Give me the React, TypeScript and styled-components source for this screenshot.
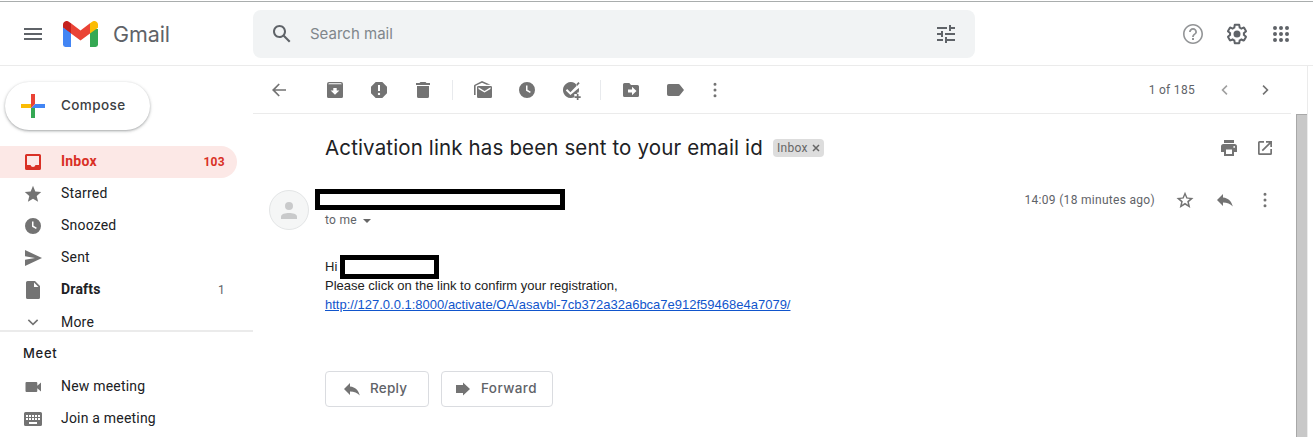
import React from 'react';
import styled, { createGlobalStyle } from 'styled-components';

const Global = createGlobalStyle`
  * { box-sizing: border-box; }
  body { margin: 0; background: #fff; font-family: Roboto, 'Liberation Sans', sans-serif; color: #202124; overflow: hidden; }
`;

const product = `Inter, 'Open Sans', sans-serif`;

const Page = styled.div`
  width: 1313px;
  height: 437px;
  display: flex;
  flex-direction: column;
  padding-top: 1px;
  overflow: hidden;
`;

const Header = styled.header`
  height: 65px;
  flex: none;
  display: flex;
  align-items: center;
  border-top: 1px solid #a9adad;
  border-bottom: 1px solid #ebebeb;
`;

const Brand = styled.div`
  width: 253px;
  display: flex;
  align-items: center;
  padding-left: 23px;
`;

const LogoMark = styled.span`
  display: flex;
  margin-left: 20px;
`;

const BrandName = styled.span`
  margin-left: 15px;
  font: 400 21.5px/28px ${product};
  letter-spacing: -0.1px;
  color: #5f6368;
`;

const Search = styled.div`
  width: 722px;
  height: 48px;
  margin-top: 1px;
  display: flex;
  align-items: center;
  border-radius: 8px;
  background: #f1f3f4;
  padding: 0 17px;
`;

const Placeholder = styled.span`
  flex: 1;
  margin-left: 16px;
  font: 400 15px/24px ${product};
  letter-spacing: 0;
  color: #80868b;
`;

const HeaderTools = styled.div`
  margin-left: auto;
  padding-right: 20px;
  display: flex;
  gap: 20px;
`;

const Body = styled.div`
  flex: 1;
  min-height: 0;
  display: flex;
`;

const Sidebar = styled.aside`
  width: 253px;
  display: flex;
  flex-direction: column;
`;

const Compose = styled.button`
  width: 145px;
  height: 48px;
  flex: none;
  margin: 16px 0 16px 5px;
  display: flex;
  align-items: center;
  gap: 16px;
  border: 0;
  border-radius: 24px;
  padding: 0 0 0 16px;
  background: #fff;
  box-shadow: 0 1px 2px rgba(60, 64, 67, 0.3), 0 1px 3px 1px rgba(60, 64, 67, 0.15);
  font: 500 13.5px/20px ${product};
  letter-spacing: 0.4px;
  color: #3c4043;
`;

const ComposeLabel = styled.span`
  padding-bottom: 2px;
`;

const Folders = styled.nav`
  height: 184px;
  overflow: hidden;
`;

const Folder = styled.div<{ $active?: boolean; $bold?: boolean }>`
  width: 237px;
  height: 32px;
  display: flex;
  align-items: center;
  padding: 0 12px 0 23px;
  border-radius: 0 16px 16px 0;
  background: ${p => (p.$active ? '#fce8e6' : 'transparent')};
  color: ${p => (p.$active ? '#d93025' : '#202124')};
  font-size: 14px;
  line-height: 20px;
  letter-spacing: 0.2px;
  font-weight: ${p => (p.$active || p.$bold ? 700 : 400)};
`;

const FolderName = styled.span<{ $low?: boolean }>`
  flex: 1;
  margin: 0 0 ${p => (p.$low ? 0 : 2)}px 18px;
`;

const Count = styled.span<{ $plain?: boolean }>`
  font-size: 12px;
  letter-spacing: 0.3px;
  font-weight: ${p => (p.$plain ? 400 : 700)};
  color: ${p => (p.$plain ? '#5f6368' : 'inherit')};
`;

const Meet = styled.section`
  flex: 1;
  border-top: 2px solid #ebebeb;
  padding-top: 7px;
`;

const MeetTitle = styled.h2`
  margin: 0 0 4px;
  padding-left: 23px;
  font: 500 13px/28px ${product};
  letter-spacing: 0.7px;
`;

const Main = styled.main`
  width: 1055px;
  display: flex;
  flex-direction: column;
  border-right: 1px solid #ebebeb;
`;

const Toolbar = styled.div`
  width: 1038px;
  height: 48px;
  flex: none;
  display: flex;
  align-items: center;
  border-bottom: 1px solid #ebebeb;
  padding: 0 16px;
`;

const Group = styled.div<{ $gap: number; $left?: number }>`
  display: flex;
  align-items: center;
  gap: ${p => p.$gap}px;
  margin-left: ${p => (p.$left === undefined ? 'auto' : p.$left + 'px')};
`;

const Divider = styled.i`
  width: 1px;
  height: 20px;
  background: #e8eaed;
  margin-left: 19px;
`;

const Paging = styled.span`
  font-size: 12px;
  letter-spacing: 0.3px;
  color: #5f6368;
`;

const Reader = styled.div`
  flex: 1;
  min-height: 0;
  display: flex;
`;

const Message = styled.article`
  width: 1043px;
`;

const SubjectRow = styled.div`
  height: 68px;
  width: 1022px;
  display: flex;
  align-items: center;
  padding-left: 72px;
`;

const Subject = styled.h1`
  margin: 0;
  width: 448px;
  white-space: nowrap;
  font: 400 20.5px/28px ${product};
  letter-spacing: 0.14px;
`;

const Chip = styled.span`
  width: 51px;
  height: 18px;
  display: flex;
  align-items: center;
  gap: 4px;
  padding-left: 4px;
  border-radius: 4px;
  background: #ddd;
  color: #666;
  font-size: 12px;
  letter-spacing: 0.3px;
`;

const SenderRow = styled.div`
  width: 1022px;
  height: 54px;
  display: flex;
  align-items: flex-start;
  padding: 7px 0 0 16px;
`;

const MessageTools = styled.div`
  height: 22px;
  margin-left: auto;
  display: flex;
  align-items: center;
  gap: 20px;
`;

const Avatar = styled.div`
  width: 40px;
  height: 40px;
  margin-top: 1px;
  border-radius: 50%;
  border: 1px solid #e3e5e6;
  background: #f5f6f6;
  display: flex;
  align-items: center;
  justify-content: center;
`;

const Sender = styled.div`
  margin-left: 6px;
`;

const Redacted = styled.div<{ $w: number; $h: number }>`
  width: ${p => p.$w}px;
  height: ${p => p.$h}px;
  flex: none;
  border: 5px solid #000;
  background: #fff;
`;

const Recipient = styled.div`
  display: flex;
  align-items: center;
  gap: 6px;
  padding: 1px 0 0 10px;
  font-size: 12px;
  line-height: 19px;
  letter-spacing: 0.3px;
  color: #5f6368;
`;

const Content = styled.div`
  padding: 19px 0 0 72px;
  font: 13px/19px 'Liberation Sans', Arial, sans-serif;
  color: #222;
`;

const Line = styled.div<{ $tall?: boolean }>`
  display: flex;
  height: ${p => (p.$tall ? 21 : 19)}px;
  gap: 2px;
`;

const Greeting = styled.span`
  width: 13px;
  padding-top: 2px;
`;

const Link = styled.a`
  color: #15c;
  text-decoration: underline;
`;

const Actions = styled.div`
  display: flex;
  gap: 12px;
  padding: 57px 0 0 72px;
`;

const Action = styled.button<{ $w: number; $pad: number; $track: number }>`
  width: ${p => p.$w}px;
  height: 36px;
  border: 1px solid #dadce0;
  border-radius: 4px;
  background: #fff;
  display: flex;
  align-items: center;
  gap: 8px;
  padding: 0 0 0 ${p => p.$pad}px;
  font: 500 13.5px/20px ${product};
  letter-spacing: ${p => p.$track}px;
  color: #5f6368;
`;

const ActionLabel = styled.span`
  padding-bottom: 2px;
`;

const Scrollbar = styled.div`
  width: 11px;
  border-top: 1px solid #a8a8a8;
  border-left: 1px solid #a8a8a8;
  background: #c8c8c8;
`;

const Glyph = styled.svg`
  flex: none;
`;

type IconProps = { d: string; size?: number; box?: number; color?: string };

const Icon = ({ d, size = 20, box = 20, color = '#737373' }: IconProps) => (
  <Glyph width={size} height={size} viewBox={`0 0 ${box} ${box}`} fill={color} fillRule="evenodd">
    <path d={d} />
  </Glyph>
);

const icons = {
  menu: 'M1 4h18v2H1zM1 9h18v2H1zM1 14h18v2H1z',
  search: 'M20.49 19l-5.73-5.73C15.53 12.2 16 10.91 16 9.5 16 5.91 13.09 3 9.5 3S3 5.91 3 9.5 5.91 16 9.5 16c1.41 0 2.7-.47 3.77-1.24L19 20.49 20.49 19zM5 9.5C5 7.01 7.01 5 9.5 5S14 7.01 14 9.5 11.99 14 9.5 14 5 11.99 5 9.5z',
  tune: 'M3 17v2h6v-2H3zM3 5v2h10V5H3zm10 16v-2h8v-2h-8v-2h-2v6h2zM7 9v2H3v2h4v2h2V9H7zm14 4v-2H11v2h10zm-6-4h2V7h4V5h-4V3h-2v6z',
  help: 'M11 18h2v-2h-2v2zm1-16C6.48 2 2 6.48 2 12s4.48 10 10 10 10-4.48 10-10S17.52 2 12 2zm0 18.4c-4.63 0-8.4-3.77-8.4-8.4S7.37 3.6 12 3.6s8.4 3.77 8.4 8.4-3.77 8.4-8.4 8.4zM12 6c-2.21 0-4 1.79-4 4h1.8c0-1.1 1.1-2.2 2.2-2.2s2.2.9 2.2 2.2c0 2-3.1 1.75-3.1 5h1.8c0-2.25 3.1-2.5 3.1-5 0-2.21-1.79-4-4-4z',
  gear: 'M13.85 22.25h-3.7c-.74 0-1.36-.54-1.45-1.27l-.27-1.89c-.27-.14-.53-.29-.79-.46l-1.8.72c-.7.26-1.47-.03-1.81-.65L2.2 15.53c-.35-.66-.2-1.44.36-1.88l1.53-1.19c-.01-.15-.02-.3-.02-.46 0-.15.01-.31.02-.46l-1.52-1.19c-.59-.45-.74-1.26-.37-1.88l1.85-3.19c.34-.62 1.11-.9 1.79-.63l1.81.73c.26-.17.52-.32.78-.46l.27-1.91c.09-.7.71-1.25 1.44-1.25h3.7c.74 0 1.36.54 1.45 1.27l.27 1.89c.27.14.53.29.79.46l1.8-.72c.71-.26 1.48.03 1.82.65l1.84 3.18c.36.66.2 1.44-.36 1.88l-1.52 1.19c.01.15.02.3.02.46s-.01.31-.02.46l1.52 1.19c.56.45.72 1.23.37 1.86l-1.86 3.22c-.34.62-1.11.9-1.8.63l-1.8-.72c-.26.17-.52.32-.78.46l-.27 1.91c-.1.68-.72 1.22-1.46 1.22zm-3.23-2h2.76l.37-2.55.53-.22c.44-.18.88-.44 1.34-.78l.45-.34 2.38.96 1.38-2.4-2.03-1.58.07-.56c.03-.26.06-.51.06-.78s-.03-.53-.06-.78l-.07-.56 2.03-1.58-1.39-2.4-2.39.96-.45-.35c-.42-.32-.87-.58-1.33-.77l-.52-.22-.37-2.55h-2.76l-.37 2.55-.53.21c-.44.19-.88.44-1.34.79l-.45.33-2.38-.95-1.39 2.39 2.03 1.58-.07.56a7 7 0 0 0-.06.79c0 .26.02.53.06.78l.07.56-2.03 1.58 1.38 2.4 2.39-.96.45.35c.43.33.86.58 1.33.77l.53.22.38 2.55zM15.5 12a3.5 3.5 0 1 1-7 0 3.5 3.5 0 0 1 7 0z',
  apps: 'M6 8a2 2 0 1 0 0-4 2 2 0 0 0 0 4zm6 0a2 2 0 1 0 0-4 2 2 0 0 0 0 4zm6 0a2 2 0 1 0 0-4 2 2 0 0 0 0 4zM6 14a2 2 0 1 0 0-4 2 2 0 0 0 0 4zm6 0a2 2 0 1 0 0-4 2 2 0 0 0 0 4zm6 0a2 2 0 1 0 0-4 2 2 0 0 0 0 4zM6 20a2 2 0 1 0 0-4 2 2 0 0 0 0 4zm6 0a2 2 0 1 0 0-4 2 2 0 0 0 0 4zm6 0a2 2 0 1 0 0-4 2 2 0 0 0 0 4z',
  inbox: 'M3.6 2h12.8A1.6 1.6 0 0 1 18 3.6v12.8a1.6 1.6 0 0 1-1.6 1.6H3.6A1.6 1.6 0 0 1 2 16.4V3.6A1.6 1.6 0 0 1 3.6 2zM4 4v9h3.5a2.6 2.6 0 0 0 5 0H16V4z',
  star: 'M10 1.8l2.3 5.7 5.9.5-4.5 3.9 1.4 5.9L10 14.7l-5.1 3.1 1.4-5.9L1.8 8l5.9-.5z',
  clock: 'M10 2a8 8 0 1 0 0 16 8 8 0 0 0 0-16zM9 5.5h1.5v4.3l3.3 2-.8 1.3L9 10.7z',
  send: 'M2 2l17 8-17 8v-6.2L12 10 2 8.2z',
  draft: 'M4.6 1H12l5 5v11.4a1.6 1.6 0 0 1-1.6 1.6H4.6A1.6 1.6 0 0 1 3 17.4V2.6A1.6 1.6 0 0 1 4.6 1zM11 2.5V7h4.5z',
  down: 'M5.9 7.3L10 11.3l4.1-4 1.1 1.1-5.2 5-5.2-5z',
  video: 'M3.5 5h9.8a1 1 0 0 1 1 1v2.8L18 5.5v9l-3.7-3.3V14a1 1 0 0 1-1 1H3.5a1 1 0 0 1-1-1V6a1 1 0 0 1 1-1z',
  keyboard: 'M2.5 3h15A1.5 1.5 0 0 1 19 4.5v11a1.5 1.5 0 0 1-1.5 1.5h-15A1.5 1.5 0 0 1 1 15.5v-11A1.5 1.5 0 0 1 2.5 3zM3 6v2h2V6zm3 0v2h2V6zm3 0v2h2V6zm3 0v2h2V6zm3 0v2h2V6zM3 9v2h2V9zm3 0v2h2V9zm3 0v2h2V9zm3 0v2h2V9zm3 0v2h2V9zM6 13v2h8v-2z',
  back: 'M17 9.2H6.2l4.6-4.6L9.600 3.400 3 10l6.600 6.600 1.200-1.200-4.600-4.600H17z',
  archive: 'M4 2h12a2 2 0 0 1 2 2v12.500a1.500 1.500 0 0 1-1.500 1.500h-13A1.500 1.500 0 0 1 2 16.500V4a2 2 0 0 1 2-2zM4 3.200l-.8 1h13.600l-.8-1zM8.300 8v2.500H5.600L10 14.700l4.400-4.200h-2.700V8z',
  report: 'M6.700 2h6.600L18 6.700v6.600L13.300 18H6.700L2 13.300V6.700zM9 5v6h2V5zm1 7.700a1.200 1.200 0 1 0 0 2.400 1.200 1.200 0 0 0 0-2.400z',
  trash: 'M7.500 2h5l1 1H17v2H3V3h3.500zM4 6h12v10.400a1.600 1.600 0 0 1-1.600 1.600H5.600A1.600 1.600 0 0 1 4 16.400z',
  unread: 'M1 15V5.800q0-.8.7-1.100L9 1l8.500 3.800h-3.800L9 2.700 2.600 5.700V15zM5.300 6h12.400A1.300 1.300 0 0 1 19 7.300v9.400a1.300 1.300 0 0 1-1.300 1.300H5.300A1.300 1.300 0 0 1 4 16.700V7.300A1.300 1.300 0 0 1 5.300 6zM5.500 7.300v1.600l6 3.600 6-3.600V7.300l-6 3.600z',
  task: 'M13.600 2.900A8 8 0 1 0 13.300 17.300V14h3v-1.600h1.300A8 8 0 0 0 17.800 8L9.400 15 4.800 10.500l1.400-1.400 3.200 3.200 6.800-7zM17.400 2l1.300 1.300-2.600 2.700-1.300-1.300zM15.800 14h1.700v2.200h2.200v1.700h-2.200v2.200h-1.700v-2.200h-2.200v-1.700h2.200z',
  move: 'M3.500 3h4.800l1.700 2h6.500A1.500 1.500 0 0 1 18 6.500v9a1.500 1.500 0 0 1-1.500 1.500h-13A1.500 1.500 0 0 1 2 15.500v-11A1.500 1.500 0 0 1 3.500 3zM7 9.500v3h4V15.300L15.500 11 11 6.700V9.500z',
  label: 'M3.700 4h9.800q.8 0 1.300.7L19 10l-4.200 5.300q-.5.700-1.300.7H3.700A1.700 1.700 0 0 1 2 14.300V5.700A1.700 1.700 0 0 1 3.700 4z',
  more: 'M10 2.700a1.500 1.500 0 1 0 0 3 1.500 1.500 0 0 0 0-3zm0 5.800a1.500 1.500 0 1 0 0 3 1.500 1.500 0 0 0 0-3zm0 5.800a1.500 1.500 0 1 0 0 3 1.500 1.500 0 0 0 0-3z',
  prev: 'M12.500 6.200L8.700 10l3.800 3.800-1.100 1.200-5-5 5-5z',
  next: 'M7.500 6.200L11.300 10l-3.800 3.800 1.100 1.200 5-5-5-5z',
  print: 'M5 2h10v3H5zM4.500 6h11A2.500 2.500 0 0 1 18 8.500V14h-3v4H5v-4H2V8.500A2.500 2.500 0 0 1 4.500 6zM7 11.500V16h6v-4.500zM15.200 8a.9.9 0 1 0 0 1.800.9.9 0 0 0 0-1.800z',
  open: 'M4.500 3H9v1.700H4.700v10.600h10.600V11H17v4.500a1.500 1.500 0 0 1-1.500 1.500h-11A1.500 1.500 0 0 1 3 15.500v-11A1.500 1.500 0 0 1 4.500 3zM11 3h6v6h-1.700V5.900l-7.400 7.400-1.200-1.200 7.400-7.400H11z',
  starOutline: 'M10 1.700l2.400 5.700 6.100.5-4.600 4 1.400 6L10 14.700l-5.300 3.200 1.400-6-4.600-4 6.100-.5zM10 5.300L8.700 8.600l-3.600.3 2.700 2.300L7 14.700l3-1.900 3 1.900-.8-3.500 2.700-2.300-3.600-.3z',
  reply: 'M8 4v3.600c5.500.6 8.500 3.800 9.800 9-2.500-3-5.600-4.100-9.800-4.100V16L2 10z',
  forward: 'M3 6h7V3.500l7 6.500-7 6.500V14H3z',
};

const GmailLogo = () => (
  <svg width="35" height="26" viewBox="0 0 35 26">
    <path d="M0 8h8v18H2.400A2.400 2.400 0 0 1 0 23.600z" fill="#4285f4" />
    <path d="M27 8h8v15.600a2.400 2.400 0 0 1-2.400 2.400H27z" fill="#34a853" />
    <path d="M8 2.300l9.500 7.100L27 2.300v10.100l-9.500 7.100L8 12.400z" fill="#ea4335" />
    <path d="M0 6.700V3.600C0 .6 3.400-1.100 5.800.7L8 2.300v10.100z" fill="#c5221f" />
    <path d="M0 6.500l8 5.900V13H0z" fill="#4285f4" />
    <path d="M27 12.400V2.300L29.200.7C31.600-1.100 35 .6 35 3.600v3.100z" fill="#fbbc04" />
  </svg>
);

const ComposePlus = () => (
  <svg width="24" height="24" viewBox="0 0 24 24">
    <path d="M0 10h10v4H0z" fill="#fbbc04" />
    <path d="M14 10h10v4H10z" fill="#4285f4" />
    <path d="M10 14h4v10h-4z" fill="#34a853" />
    <path d="M10 0h4v10l-4 4z" fill="#ea4335" />
  </svg>
);

const folders = [
  { name: 'Inbox', icon: icons.inbox, count: '103', active: true },
  { name: 'Starred', icon: icons.star },
  { name: 'Snoozed', icon: icons.clock },
  { name: 'Sent', icon: icons.send },
  { name: 'Drafts', icon: icons.draft, count: '1', bold: true },
  { name: 'More', icon: icons.down, low: true },
];

export default function App() {
  return (
    <Page>
      <Global />
      <Header>
        <Brand>
          <Icon d={icons.menu} color="#5f6368" />
          <LogoMark><GmailLogo /></LogoMark>
          <BrandName>Gmail</BrandName>
        </Brand>
        <Search>
          <Icon d={icons.search} size={24} box={24} color="#5f6368" />
          <Placeholder>Search mail</Placeholder>
          <Icon d={icons.tune} size={24} box={24} color="#5f6368" />
        </Search>
        <HeaderTools>
          <Icon d={icons.help} size={24} box={24} color="#929496" />
          <Icon d={icons.gear} size={24} box={24} color="#5f6368" />
          <Icon d={icons.apps} size={24} box={24} color="#5f6368" />
        </HeaderTools>
      </Header>
      <Body>
        <Sidebar>
          <Compose><ComposePlus /><ComposeLabel>Compose</ComposeLabel></Compose>
          <Folders>
            {folders.map(f => (
              <Folder key={f.name} $active={f.active} $bold={f.bold}>
                <Icon d={f.icon} color={f.active ? '#d93025' : undefined} />
                <FolderName $low={f.low}>{f.name}</FolderName>
                {f.count && <Count $plain={!f.active}>{f.count}</Count>}
              </Folder>
            ))}
          </Folders>
          <Meet>
            <MeetTitle>Meet</MeetTitle>
            <Folder><Icon d={icons.video} /><FolderName>New meeting</FolderName></Folder>
            <Folder><Icon d={icons.keyboard} /><FolderName>Join a meeting</FolderName></Folder>
          </Meet>
        </Sidebar>
        <Main>
          <Toolbar>
            <Icon d={icons.back} />
            <Group $gap={24} $left={36}>
              <Icon d={icons.archive} />
              <Icon d={icons.report} />
              <Icon d={icons.trash} />
            </Group>
            <Divider />
            <Group $gap={24} $left={20}>
              <Icon d={icons.unread} />
              <Icon d={icons.clock} />
              <Icon d={icons.task} />
            </Group>
            <Divider />
            <Group $gap={24} $left={20}>
              <Icon d={icons.move} />
              <Icon d={icons.label} />
            </Group>
            <Group $gap={0} $left={20}><Icon d={icons.more} /></Group>
            <Group $gap={20}>
              <Paging>1 of 185</Paging>
              <Icon d={icons.prev} color="#a0a0a0" />
              <Icon d={icons.next} />
            </Group>
          </Toolbar>
          <Reader>
            <Message>
              <SubjectRow>
                <Subject>Activation link has been sent to your email id</Subject>
                <Chip>
                  Inbox
                  <svg width="8" height="8" viewBox="0 0 8 8" stroke="#666" strokeWidth="1.5"><path d="M1 1l6 6M7 1L1 7" /></svg>
                </Chip>
                <Group $gap={16}><Icon d={icons.print} /><Icon d={icons.open} /></Group>
              </SubjectRow>
              <SenderRow>
                <Avatar>
                  <svg width="16" height="17" viewBox="0 0 16 17" fill="#c9cacb"><circle cx="8" cy="4" r="4" /><path d="M0 17v-2.500C0 12 4.500 11 8 11s8 1 8 3.500V17z" /></svg>
                </Avatar>
                <Sender>
                  <Redacted $w={250} $h={21} />
                  <Recipient>
                    to me
                    <svg width="8" height="4" viewBox="0 0 8 4" fill="#666"><path d="M0 0h8L4 4z" /></svg>
                  </Recipient>
                </Sender>
                <MessageTools>
                  <Paging>14:09 (18 minutes ago)</Paging>
                  <Icon d={icons.starOutline} />
                  <Icon d={icons.reply} />
                  <Icon d={icons.more} />
                </MessageTools>
              </SenderRow>
              <Content>
                <Line $tall><Greeting>Hi</Greeting><Redacted $w={99} $h={24} /></Line>
                <Line>Please click on the link to confirm your registration,</Line>
                <Line><Link>http://127.0.0.1:8000/activate/OA/asavbl-7cb372a32a6bca7e912f59468e4a7079/</Link></Line>
              </Content>
              <Actions>
                <Action $w={104} $pad={16} $track={0.2}><Icon d={icons.reply} /><ActionLabel>Reply</ActionLabel></Action>
                <Action $w={112} $pad={11} $track={0.4}><Icon d={icons.forward} /><ActionLabel>Forward</ActionLabel></Action>
              </Actions>
            </Message>
            <Scrollbar />
          </Reader>
        </Main>
      </Body>
    </Page>
  );
}
